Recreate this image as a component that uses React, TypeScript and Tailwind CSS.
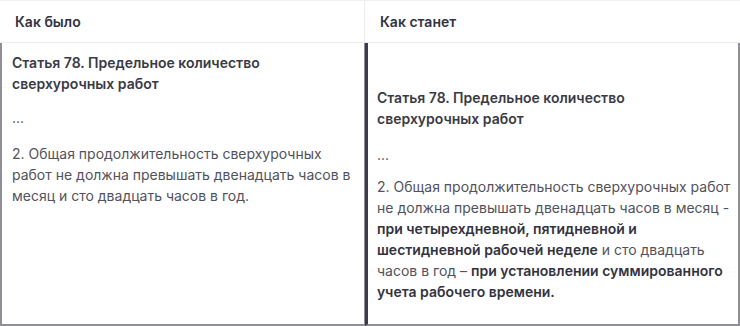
import React from 'react';

const App: React.FC = () => {
  return (
    <div
      className="w-[740px] h-[326px] bg-white text-[14px] leading-[21px] text-[#52525c]"
      style={{ fontFamily: 'Inter, "Noto Sans", sans-serif' }}
    >
      <div className="grid grid-cols-[365px_375px] h-[43px] border-t border-[#f0f0f2] border-b border-b-[#ececef]">
        <div className="flex items-center pl-[15px] border-r border-[#ececef] text-[14px] font-semibold text-[#33333f]">
          Как было
        </div>
        <div className="flex items-center pl-[15px] text-[14px] font-semibold text-[#33333f]">
          Как станет
        </div>
      </div>
      <div className="grid grid-cols-[365px_375px] h-[283px]">
        <div className="border-l-2 border-b-2 border-r border-[#8f8f95] pl-[10px] pr-3 pt-[9px]">
          <p className="max-w-[300px] font-semibold text-[#3a3a45]">
            Статья 78. Предельное количество сверхурочных работ
          </p>
          <p className="mt-[13px]">...</p>
          <p className="mt-[15px]">
            2. Общая продолжительность сверхурочных работ не должна превышать двенадцать часов в
            месяц и сто двадцать часов в год.
          </p>
        </div>
        <div className="border-l-[3px] border-l-[#3b3b4c] border-b-2 border-b-[#8f8f95] border-r-2 border-r-[#8f8f95] pl-[9px] pr-1 pt-[44px]">
          <p className="max-w-[300px] font-semibold text-[#3a3a45]">
            Статья 78. Предельное количество сверхурочных работ
          </p>
          <p className="mt-[15px]">...</p>
          <p className="mt-[11px]">
            2. Общая продолжительность сверхурочных работ не должна превышать двенадцать часов в
            месяц -{' '}
            <span className="font-semibold text-[#33333f]">
              при четырехдневной, пятидневной и шестидневной рабочей неделе
            </span>{' '}
            и сто двадцать часов в год –{' '}
            <span className="font-semibold text-[#33333f]">
              при установлении суммированного учета рабочего времени.
            </span>
          </p>
        </div>
      </div>
    </div>
  );
};

export default App;
